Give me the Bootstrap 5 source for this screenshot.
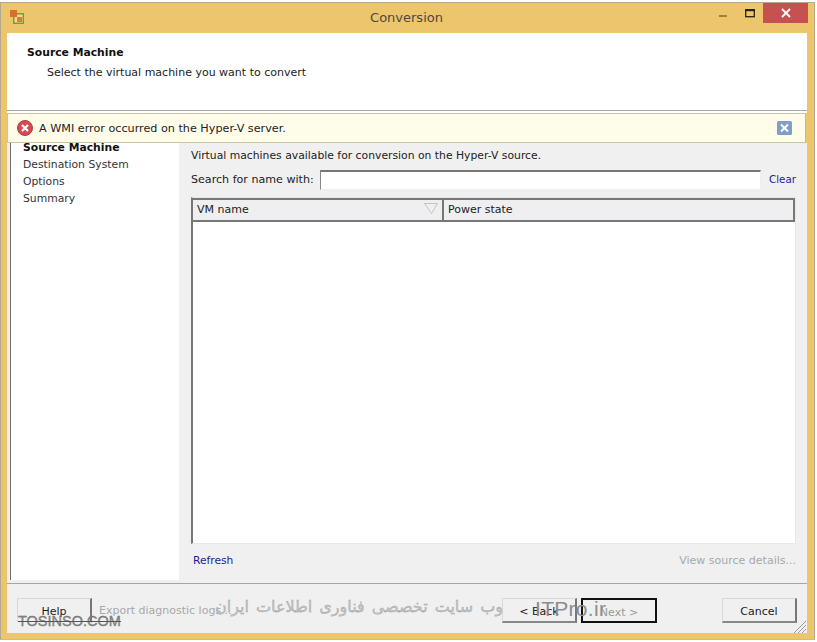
<!DOCTYPE html>
<html lang="en">
<head>
<meta charset="utf-8">
<title>Conversion</title>
<link rel="stylesheet" href="https://cdn.jsdelivr.net/npm/bootstrap@5.3.0/dist/css/bootstrap.min.css">
<style>
html,body{margin:0;height:642px;overflow:hidden;background:#fff}
body{font-family:"DejaVu Sans","Liberation Sans",sans-serif;font-size:11px;line-height:14px;color:#222}
.win{width:815px;height:638px;margin-top:2px;background:#edc56c;border:1px solid #b5a98c;border-bottom-color:#c9bb95;position:relative}
.tbar{height:30px;padding:0 6px 0 9px}
.tside{flex:1 1 0}
.ticon{margin-top:7px}
.tname{font-size:13px;color:#4a4a3f;line-height:16px;padding:7px 5px 0 0}
.ctl1{width:45px;height:20px}
.ctl2{width:30px;height:20px}
.cx{width:45px;height:20px;background:#c75050}
.inner{margin:0 7px 0 6px;height:600px}
.hdr{background:#fff;height:78px;padding:13px 20px;border-bottom:1px solid #a8a8a8;color:#222}
.hdr b{color:#111;display:block;margin-bottom:6px;font-size:10.8px}
.hsub{padding-left:20px}
.wgap{height:2px;background:#fff}
.warn{height:30px;background:#fffdea;border:1px solid #c8c4a4;border-right-color:#d0b878;padding:0 13px 0 9px;gap:6px;margin-right:1px;font-size:11.2px}
.warntxt{padding-top:2px}
.mainp{height:441px;background:#f0f0f0;border-bottom:1px solid #a5a5a5}
.side{width:169px;height:437px;margin-left:3px;background:#fff;border-left:1px solid #6e6e6e;padding:0 0 0 12px;color:#333;line-height:17px;margin-right:12px;font-size:10.8px}
.side b{color:#111;display:block;margin-top:-4px}
.rpane{width:605px;padding-top:5px}
.intro{line-height:16px;margin-bottom:6px;font-size:10.8px}
.srow{height:20px;margin-bottom:7px;white-space:nowrap}
.slabel{width:129px;flex:none;font-size:11.1px}
.sbox{width:441px;height:20px;flex:none;background:#fff;border:1px solid #eee;border-top:2px solid #777;border-left:1px solid #888}
.lnk{color:#1d1d9c;text-decoration:none}
.clr{margin-left:8px;font-size:10.3px;padding-bottom:3px}
.tbl{height:347px;background:#fff;border:1px solid #e8e8e8;border-left:2px solid #777;width:605px}
.thd{height:24px;background:#efeff1;border:2px solid #777;border-left:0}
.th1{width:251px;border-right:2px solid #777;padding-left:4px;line-height:20px;position:relative}
.th2{padding-left:4px;line-height:20px}
.sortmk{position:absolute;right:3px;top:2px}
.lnkrow{padding:10px 0 0 2px;line-height:14px;width:605px}
.rfsh{font-size:10.7px}
.mut{color:#a8a8a8}
.foot{height:49px;background:#f0f0f0;padding:14px 10px 0 10px}
.wbtn{height:25px;width:75px;background:#f0f0f0;border:1px solid #d8d8d8;border-right:2px solid #777;border-bottom:2px solid #888;text-align:center;line-height:23px;color:#222;font-size:11px;padding:1px 0 0}
.wbtn.fc{border:2px solid #111;width:76px;color:#999}
.help{border-bottom-color:#efefef}
.gap1{margin-right:4px}
.gap2{margin-left:65px}
.exp{line-height:25px;margin-left:7px}
.wm1{position:absolute;left:17px;top:611px;font-size:14.500px;color:#8a8a8a;font-family:"Liberation Sans",sans-serif;text-decoration:line-through;text-decoration-thickness:1px;text-decoration-color:#555;-webkit-text-stroke:.3px #666}
.wm2{position:absolute;left:217px;top:597px;width:285px;direction:rtl;font-size:16px;color:#c2c2c2;white-space:nowrap;word-spacing:2px;-webkit-text-stroke:.3px #999}
.wm3{position:absolute;left:534px;top:594px;font-size:21px;line-height:24px;color:#8d8d8d;font-family:"Liberation Sans",sans-serif;letter-spacing:.3px}
.grip{position:absolute;right:7px;bottom:5px}
</style>
</head>
<body>
<div class="win">
  <div class="tbar d-flex align-items-start">
    <div class="tside"><svg class="ticon d-block" width="14" height="14" viewBox="0 0 14 14"><rect x="3.800" y="3.800" width="9.500" height="9.500" fill="#f2d98c" stroke="#66a632" stroke-width="1.500"/><rect x="0" y="0" width="7" height="7" fill="#d9702a"/><rect x="7" y="7" width="5" height="5" fill="#e07b35"/></svg></div>
    <div class="tname text-center">Conversion</div>
    <div class="tside d-flex justify-content-end">
      <svg class="ctl1" viewBox="0 0 45 20"><rect x="31" y="12" width="8" height="2" fill="#a8821f"/></svg>
      <svg class="ctl2" viewBox="0 0 30 20"><rect x="12.700" y="6.700" width="8.600" height="7" fill="none" stroke="#2a2208" stroke-width="1.300"/><rect x="12" y="6" width="10" height="2.200" fill="#2a2208"/></svg>
      <div class="cx d-flex align-items-center justify-content-center"><svg width="10" height="10" viewBox="0 0 10 10"><path d="M1 1L9 9M9 1L1 9" stroke="#fff" stroke-width="1.800"/></svg></div>
    </div>
  </div>
  <div class="inner">
    <div class="hdr"><b>Source Machine</b><div class="hsub">Select the virtual machine you want to convert</div></div>
    <div class="wgap"></div>
    <div class="warn d-flex align-items-center">
      <svg width="16" height="16" viewBox="0 0 16 16"><circle cx="8" cy="8" r="7.500" fill="#d44a50" stroke="#b03a40"/><path d="M5 5L11 11M11 5L5 11" stroke="#fff" stroke-width="2.200"/></svg>
      <span class="flex-grow-1 warntxt">A WMI error occurred on the Hyper-V server.</span>
      <svg width="15" height="14" viewBox="0 0 15 14"><rect width="15" height="14" rx="1.500" fill="#7f9fc8"/><path d="M4 3.500L11 10.500M11 3.500L4 10.500" stroke="#fff" stroke-width="2"/></svg>
    </div>
    <div class="mainp d-flex">
      <div class="side">
        <b>Source Machine</b>
        <div>Destination System</div>
        <div>Options</div>
        <div>Summary</div>
      </div>
      <div class="rpane">
        <div class="intro">Virtual machines available for conversion on the Hyper-V source.</div>
        <div class="srow d-flex align-items-center">
          <span class="slabel">Search for name with:</span>
          <div class="sbox"></div>
          <a class="lnk clr" href="#">Clear</a>
        </div>
        <div class="tbl">
          <div class="thd d-flex">
            <div class="th1">VM name<svg class="sortmk" width="16" height="13" viewBox="0 0 16 13"><path d="M1.500 1.500H14.500L8.500 11.500Z" fill="none" stroke="#c4c4c4"/></svg></div>
            <div class="th2">Power state</div>
          </div>
        </div>
        <div class="lnkrow d-flex justify-content-between">
          <a class="lnk rfsh" href="#">Refresh</a>
          <span class="mut">View source details...</span>
        </div>
      </div>
    </div>
    <div class="foot d-flex justify-content-between">
      <div class="d-flex">
        <button class="wbtn help" type="button">Help</button>
        <span class="mut exp">Export diagnostic logs...</span>
      </div>
      <div class="d-flex">
        <button class="wbtn gap1" type="button">&lt; Back</button>
        <button class="wbtn fc" type="button">Next &gt;</button>
        <button class="wbtn gap2" type="button">Cancel</button>
      </div>
    </div>
  </div>
  <div class="wm1">TOSINSO.COM</div>
  <div class="wm2">وب سایت تخصصی فناوری اطلاعات ایران</div>
  <div class="wm3">ITPro.ir</div>
  <svg class="grip" width="14" height="14" viewBox="0 0 14 14"><path d="M13 1L1 13M13 5L5 13M13 9L9 13" stroke="#9a9a9a" stroke-width="1"/></svg>
</div>
</body>
</html>
